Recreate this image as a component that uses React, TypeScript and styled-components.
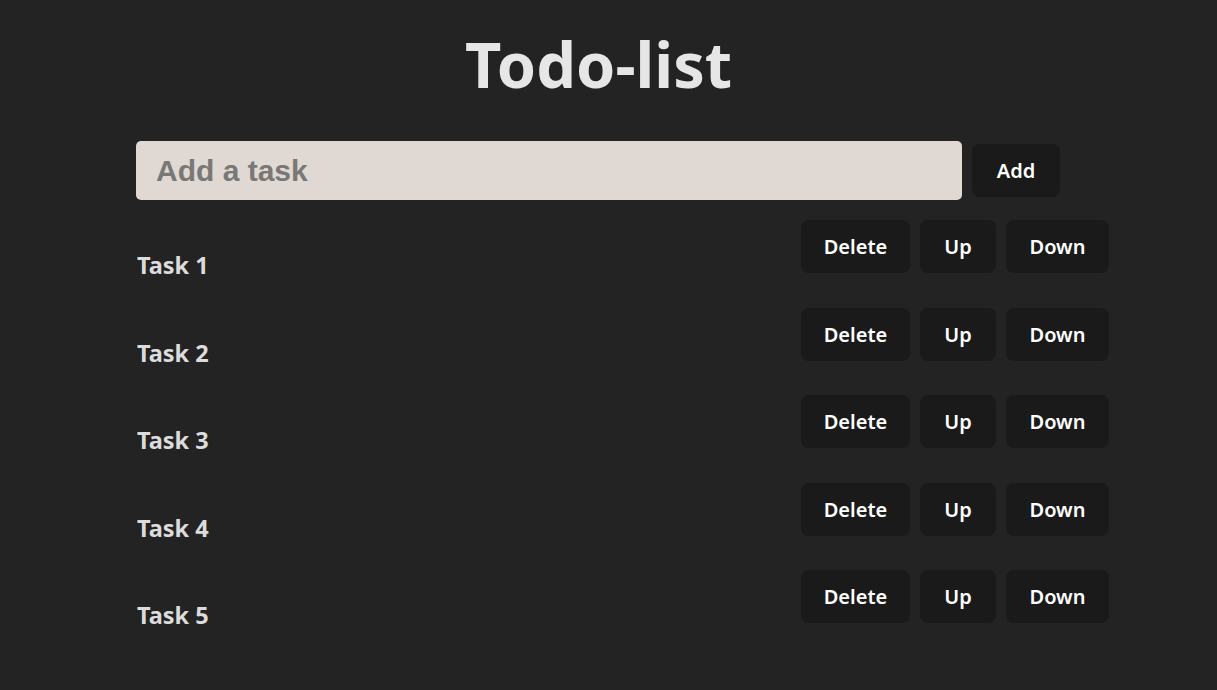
import React, { useState } from 'react';
import styled, { createGlobalStyle } from 'styled-components';

const GlobalStyle = createGlobalStyle`
    html, body {
        margin: 0;
        padding: 0;
        background: #232323;
    }
    body {
        font-family: "Noto Sans", "Open Sans", sans-serif;
        color: #e4e4e4;
    }
`;

const Page = styled.div`
    min-height: 690px;
    padding: 0 108px 0 136px;
    box-sizing: border-box;
`;

const Title = styled.h1`
    margin: 0;
    padding: 23px 48px 36px 0;
    text-align: center;
    font-size: 63px;
    line-height: 82px;
    font-weight: 700;
    color: #e6e6e6;
`;

const InputRow = styled.div`
    display: flex;
    align-items: center;
    gap: 10px;
`;

const TaskInput = styled.input`
    width: 826px;
    height: 59px;
    box-sizing: border-box;
    padding: 0 20px;
    border: none;
    border-radius: 5px;
    background: #e0d9d3;
    font-family: "Liberation Sans", Arial, sans-serif;
    font-size: 30px;
    font-weight: 700;
    color: #333;
    outline: none;

    &::placeholder {
        color: #7a7876;
    }
`;

const Button = styled.button<{ $w: number }>`
    width: ${(p) => p.$w}px;
    height: 53px;
    border: none;
    border-radius: 8px;
    background: #1a1a1a;
    color: #ffffff;
    font-family: "Noto Sans", "Open Sans", sans-serif;
    font-size: 20px;
    font-weight: 600;
    cursor: pointer;
`;

const List = styled.ol`
    list-style: none;
    margin: 20px 0 0;
    padding: 0;
`;

const Row = styled.li`
    display: flex;
    align-items: flex-start;
    height: 87.5px;
`;

const TaskText = styled.span`
    flex: 1;
    padding: 29px 0 0 1px;
    font-size: 23.5px;
    font-weight: 700;
    color: #dcdcdc;
    line-height: 32px;
`;

const Actions = styled.div`
    display: flex;
    gap: 10px;
`;

export default function App() {
    const [tasks, setTasks] = useState(['Task 1', 'Task 2', 'Task 3', 'Task 4', 'Task 5']);
    const [text, setText] = useState('');

    const add = () => {
        if (!text.trim()) return;
        setTasks([...tasks, text]);
        setText('');
    };
    const remove = (i: number) => setTasks(tasks.filter((_, j) => j !== i));
    const move = (i: number, d: number) => {
        const j = i + d;
        if (j < 0 || j >= tasks.length) return;
        const next = [...tasks];
        [next[i], next[j]] = [next[j], next[i]];
        setTasks(next);
    };

    return (
        <>
            <GlobalStyle />
            <Page>
                <Title>Todo-list</Title>
                <InputRow>
                    <TaskInput
                        placeholder="Add a task"
                        value={text}
                        onChange={(e) => setText(e.target.value)}
                    />
                    <Button $w={88} onClick={add}>
                        Add
                    </Button>
                </InputRow>
                <List>
                    {tasks.map((t, i) => (
                        <Row key={i}>
                            <TaskText>{t}</TaskText>
                            <Actions>
                                <Button $w={109} onClick={() => remove(i)}>
                                    Delete
                                </Button>
                                <Button $w={76} onClick={() => move(i, -1)}>
                                    Up
                                </Button>
                                <Button $w={103} onClick={() => move(i, 1)}>
                                    Down
                                </Button>
                            </Actions>
                        </Row>
                    ))}
                </List>
            </Page>
        </>
    );
}
